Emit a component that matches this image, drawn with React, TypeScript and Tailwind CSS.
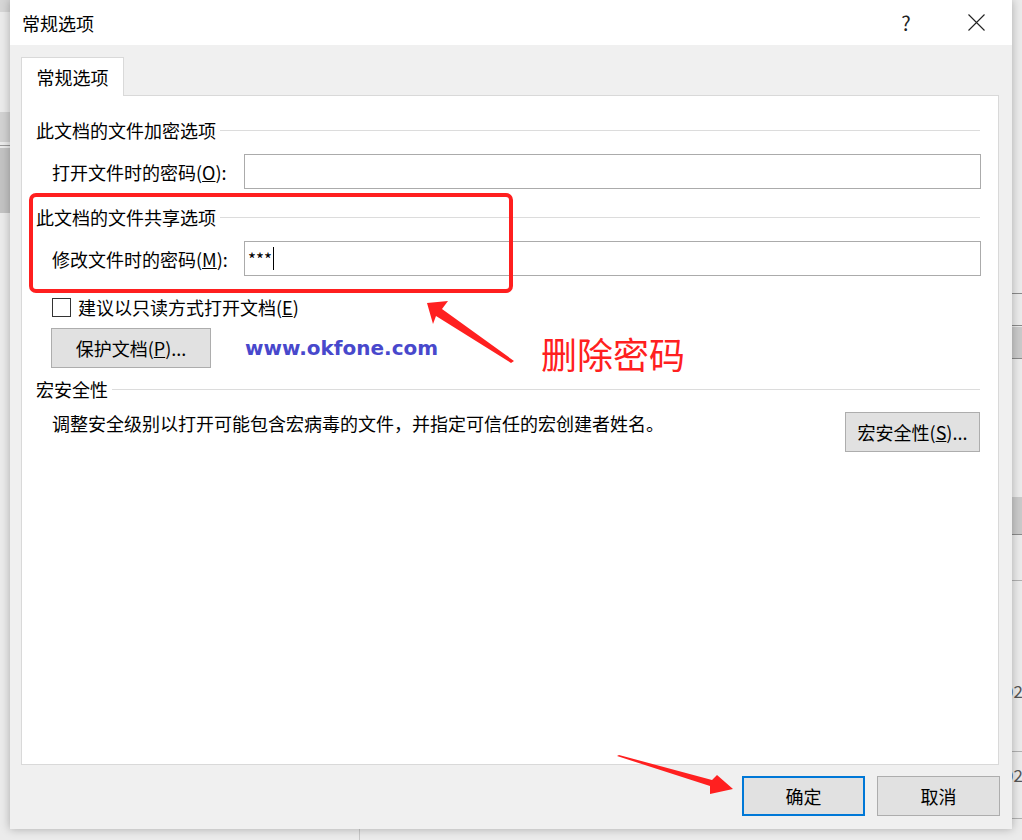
const font = "font-['Noto_Sans_CJK_SC',sans-serif]"

function Heading({ text }: { text: string }) {
  return (
    <div className="flex h-[26px] items-center">
      <span className="leading-[26px]">{text}</span>
      <div className="ml-[4px] h-px flex-1 bg-[#dcdcdc]" />
    </div>
  )
}

function Btn({ children, w, primary }: { children: React.ReactNode; w: string; primary?: boolean }) {
  return (
    <div
      className={`flex h-[40px] items-center justify-center bg-[#e1e1e1] leading-[26px] ${w} ${
        primary ? 'border-2 border-[#0078d7]' : 'border border-[#adadad]'
      }`}
    >
      {children}
    </div>
  )
}

export default function App() {
  return (
    <div className={`relative h-[840px] w-[1022px] overflow-hidden bg-[#ebebeb] text-[18px] text-black ${font}`}>
      {/* window behind the dialog */}
      <div className="absolute left-0 top-0 h-[12px] w-[10px] bg-[#d6d6d6]" />
      <div className="absolute left-[152px] top-0 h-[3px] w-[16px] bg-[#3a6fd0]" />
      <div className="absolute left-0 top-[112px] h-[30px] w-[10px] bg-[#d2d2d2]" />
      <div className="absolute left-0 top-[145px] h-px w-[10px] bg-[#9a9a9a]" />
      <div className="absolute left-0 top-[148px] h-[65px] w-[10px] bg-[#c3c3c3]" />
      <div className="absolute right-0 top-[293px] h-px w-[12px] bg-[#8a8a8a]" />
      <div className="absolute right-0 top-[325px] h-px w-[12px] bg-[#8a8a8a]" />
      <div className="absolute right-0 top-[327px] h-[32px] w-[12px] border-b border-[#8a8a8a] bg-[#cacaca]" />
      <div className="absolute right-0 top-[497px] h-[38px] w-[12px] border-b border-[#8a8a8a] bg-[#cacaca]" />
      <div className="absolute right-0 top-[580px] h-px w-[12px] bg-[#b0b0b0]" />
      <div className="absolute right-0 top-[751px] h-px w-[12px] bg-[#b0b0b0]" />
      <div className="absolute right-0 top-[818px] h-px w-[12px] bg-[#b0b0b0]" />
      <div className="absolute left-[1004px] top-[678px] text-[17px] leading-[26px] text-[#555]">02</div>
      <div className="absolute left-[1004px] top-[762px] text-[17px] leading-[26px] text-[#555]">02</div>
      <div className="absolute left-[359px] top-[829px] h-[11px] w-px bg-[#c8c8c8]" />

      {/* dialog */}
      <div className="absolute left-[10px] top-0 flex h-[829px] w-[1002px] flex-col bg-[#f0f0f0] shadow-[0_0_9px_rgba(0,0,0,0.28)]">
        <div className="flex h-[45px] shrink-0 items-center bg-white pl-[12px] pr-[13px]">
          <span className="leading-[26px]">常规选项</span>
          <span className="ml-auto w-[40px] text-center text-[20px] leading-[26px] text-[#222]">?</span>
          <div className="ml-[27px] flex w-[46px] items-center justify-center">
            <svg width="17" height="17" viewBox="0 0 17 17" fill="none" stroke="#222" strokeWidth="1.1">
              <path d="M0.5 0.5 L16.5 16.5 M16.5 0.5 L0.5 16.5" />
            </svg>
          </div>
        </div>

        <div className="flex flex-1 flex-col px-[11px] pt-[12px]">
          <div className="relative z-10 -mb-px flex h-[39px] w-[103px] items-center justify-center border border-b-0 border-[#d9d9d9] bg-white">
            <span className="leading-[26px]">常规选项</span>
          </div>
          <div className="flex h-[670px] w-[978px] flex-col border border-[#d9d9d9] bg-white pl-[14px] pr-[18px] pt-[21px]">
            <Heading text="此文档的文件加密选项" />
            <div className="mt-[11px] flex h-[35px] items-center pl-[16px]">
              <span className="w-[192px] leading-[26px]">
                打开文件时的密码(<u>O</u>):
              </span>
              <div className="-mr-px h-[35px] flex-1 border border-[#ababab] bg-white" />
            </div>

            <div className="mt-[15px]">
              <Heading text="此文档的文件共享选项" />
            </div>
            <div className="mt-[11px] flex h-[35px] items-center pl-[16px]">
              <span className="w-[192px] leading-[26px]">
                修改文件时的密码(<u>M</u>):
              </span>
              <div className="-mr-px flex h-[35px] flex-1 items-center border border-[#ababab] bg-white pl-[3px]">
                <span className="text-[17px] leading-[22px]">***</span>
                <span className="ml-px h-[23px] w-px bg-black" />
              </div>
            </div>

            <div className="mt-[18px] flex h-[26px] items-center pl-[16px]">
              <div className="h-[19px] w-[19px] border border-[#333] bg-white" />
              <span className="ml-[7px] leading-[26px]">
                建议以只读方式打开文档(<u>E</u>)
              </span>
            </div>

            <div className="mt-[8px] flex h-[40px] items-center">
              <div className="ml-[15px]">
                <Btn w="w-[160px]">
                  保护文档(<u>P</u>)...
                </Btn>
              </div>
              <span className="ml-[34px] font-['DejaVu_Sans',sans-serif] text-[20px] font-bold leading-[26px] text-[#4848cc]">
                www.okfone.com
              </span>
            </div>

            <div className="mt-[8px]">
              <Heading text="宏安全性" />
            </div>
            <div className="mt-[8px] flex items-start pl-[16px]">
              <span className="leading-[26px]">
                调整安全级别以打开可能包含宏病毒的文件，并指定可信任的宏创建者姓名。
              </span>
              <div className="ml-auto mt-[2px]">
                <Btn w="w-[135px]">
                  宏安全性(<u>S</u>)...
                </Btn>
              </div>
            </div>
          </div>

          <div className="mt-[11px] flex justify-end gap-[12px] pr-[1px]">
            <Btn w="w-[123px]" primary>
              确定
            </Btn>
            <Btn w="w-[123px]">取消</Btn>
          </div>
        </div>
      </div>

      {/* annotations */}
      <div className="absolute left-[29px] top-[193px] h-[100px] w-[484px] rounded-[7px] border-[4px] border-[#ff1f1f]" />
      <div className="absolute left-[541px] top-[330px] text-[36px] leading-[46px] text-[#ff2020]">删除密码</div>
      <svg className="pointer-events-none absolute left-0 top-0" width="1022" height="840" viewBox="0 0 1022 840">
        <polygon points="427,303 448,301 442,309 514,361 511,363 436,316 433,324" fill="#ff2020" />
        <polygon points="617,756 619,755 712,780 717,775 733,789 710,794 710,786" fill="#ff2020" />
      </svg>
    </div>
  )
}
